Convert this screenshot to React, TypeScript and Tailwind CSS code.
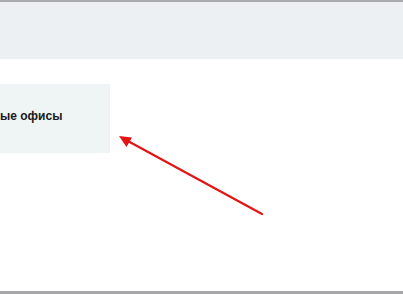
import React from "react";

const App: React.FC = () => {
  return (
    <div className="relative flex h-[294px] w-[403px] flex-col overflow-hidden bg-white font-['Liberation_Sans',Arial,sans-serif]">
      {/* Header band */}
      <div className="h-[59px] border-t-2 border-[#a9abae] bg-[#edf0f3]"></div>

      {/* Content */}
      <div className="flex-1 border-b-[3px] border-[#a7a7a9] pt-[25px]">
        <div className="flex h-[69px] w-[110px] items-center bg-[#eff4f4] pb-[5px]">
          <span className="text-[12px] font-bold text-[#1a1a1a]">ые офисы</span>
        </div>
      </div>

      {/* Pointer arrow */}
      <svg
        className="pointer-events-none absolute left-0 top-0"
        width="403"
        height="294"
        viewBox="0 0 403 294"
      >
        <line x1="262" y1="214" x2="126" y2="140" stroke="#e31414" strokeWidth="2.2" strokeLinecap="round" />
        <polygon points="119,136 132,137.5 126.5,147" fill="#e31414" />
      </svg>
    </div>
  );
};

export default App;
